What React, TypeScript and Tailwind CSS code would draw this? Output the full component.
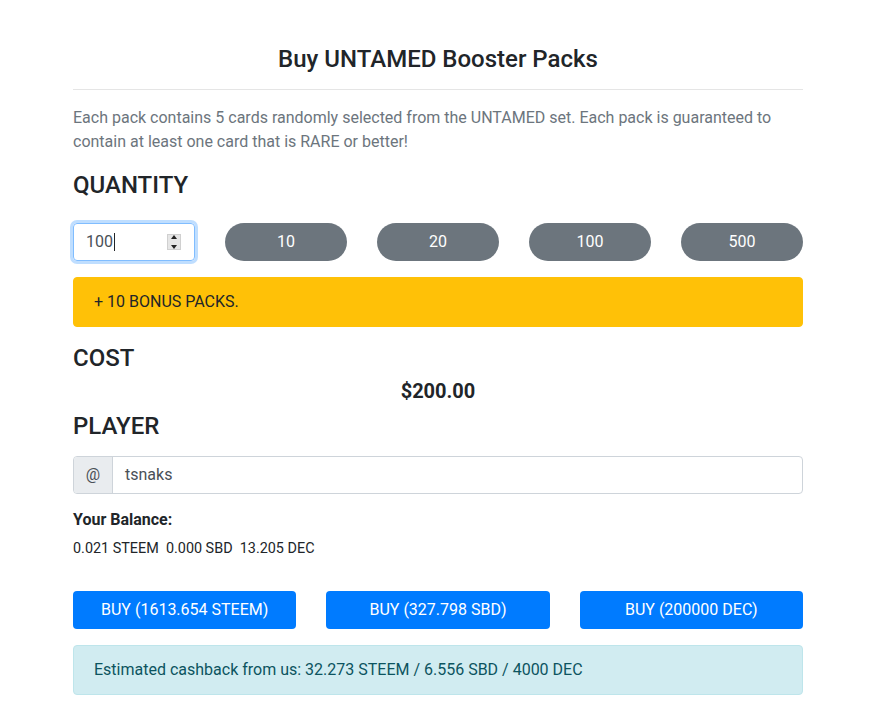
import React from "react";

export default function App() {
  const pills = ["10", "20", "100", "500"];
  const buys = ["BUY (1613.654 STEEM)", "BUY (327.798 SBD)", "BUY (200000 DEC)"];
  return (
    <div className="min-h-[708px] bg-white" style={{ fontFamily: "Roboto, 'Liberation Sans', sans-serif" }}>
      <div className="w-[730px] ml-[73px] pt-[43px] text-[#212529]">
        <h2 className="text-[24px] font-medium leading-[33px] text-center">Buy UNTAMED Booster Packs</h2>
        <div className="h-px bg-[#e5e5e5] mt-[13px]" />
        <p className="mt-[16px] text-[16px] leading-[24px] text-[#6c757d]">
          Each pack contains 5 cards randomly selected from the UNTAMED set. Each pack is guaranteed to contain at least one card that is RARE or better!
        </p>
        <h4 className="mt-[17px] text-[24px] font-medium leading-[29px]">QUANTITY</h4>
        <div className="mt-[23px] flex gap-[30px]">
          <div className="w-[122px] h-[38px] rounded-[4px] border border-[#80bdff] shadow-[0_0_0_3px_rgba(0,123,255,0.25)] flex items-center pl-[12px] pr-[13px]">
            <span className="text-[16px] text-[#495057]">100</span>
            <span className="w-px h-[18px] bg-[#212529] ml-px" />
            <div className="ml-auto w-[14px] h-[16px] bg-[#e6e6e6] border border-[#d0d0d0] flex flex-col items-center justify-center gap-[3px]">
              <div className="w-0 h-0 border-l-[3px] border-r-[3px] border-b-[4px] border-l-transparent border-r-transparent border-b-[#222]" />
              <div className="w-[10px] h-px bg-[#bbb]" />
              <div className="w-0 h-0 border-l-[3px] border-r-[3px] border-t-[4px] border-l-transparent border-r-transparent border-t-[#222]" />
            </div>
          </div>
          {pills.map((p) => (
            <div key={p} className="w-[122px] h-[38px] rounded-full bg-[#6c757d] text-white text-[16px] flex items-center justify-center">
              {p}
            </div>
          ))}
        </div>
        <div className="mt-[16px] h-[50px] rounded-[4px] bg-[#ffc107] border border-[#ffc107] px-[20px] flex items-center text-[16px] text-[#212529]">
          + 10 BONUS PACKS.
        </div>
        <h4 className="mt-[17px] text-[24px] font-medium leading-[29px]">COST</h4>
        <div className="mt-[6px] text-[20px] font-bold leading-[24px] text-center">$200.00</div>
        <h4 className="mt-[9px] text-[24px] font-medium leading-[29px]">PLAYER</h4>
        <div className="mt-[15px] h-[38px] flex rounded-[4px] border border-[#ced4da] overflow-hidden">
          <div className="w-[39px] bg-[#e9ecef] border-r border-[#ced4da] flex items-center justify-center text-[16px] text-[#495057]">@</div>
          <div className="flex-1 flex items-center pl-[12px] text-[16px] text-[#495057]">tsnaks</div>
        </div>
        <div className="mt-[14px] text-[16px] font-bold leading-[24px]">Your Balance:</div>
        <div className="mt-[6px] text-[14.4px] leading-[21px] whitespace-pre">{"0.021 STEEM  0.000 SBD  13.205 DEC"}</div>
        <div className="mt-[32px] flex gap-[30px]">
          {buys.map((b) => (
            <div key={b} className="flex-1 h-[38px] rounded-[4px] bg-[#007bff] text-white text-[16px] flex items-center justify-center">
              {b}
            </div>
          ))}
        </div>
        <div className="mt-[16px] h-[50px] rounded-[4px] bg-[#d1ecf1] border border-[#bee5eb] px-[20px] flex items-center text-[16px] text-[#0c5460]">
          Estimated cashback from us: 32.273 STEEM / 6.556 SBD / 4000 DEC
        </div>
      </div>
    </div>
  );
}
